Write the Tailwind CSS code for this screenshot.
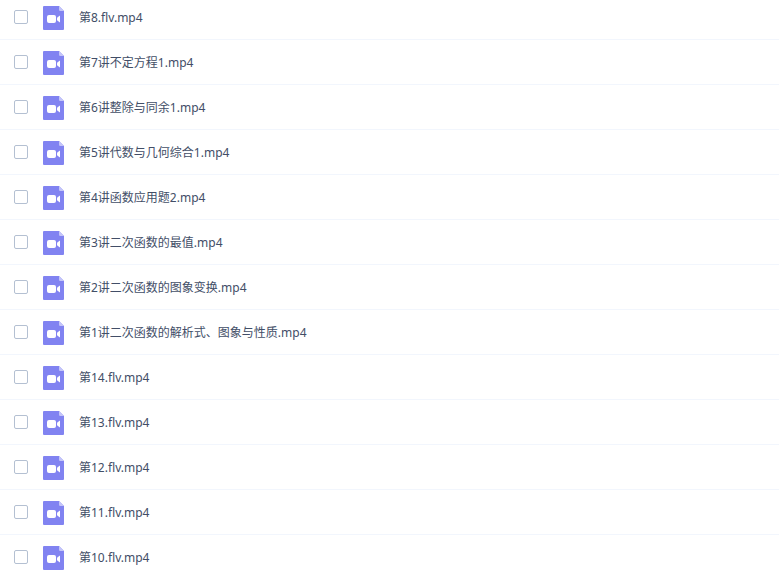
<!DOCTYPE html>
<html lang="zh-CN">
<head>
  <meta charset="UTF-8" />
  <title>视频列表</title>
  <meta name="viewport" content="width=device-width, initial-scale=1.0" />
  <script src="https://cdn.jsdelivr.net/npm/@tailwindcss/browser@4"></script>
</head>
<body class="bg-white text-[#424e67] font-['Noto_Sans','Noto_Sans_CJK_SC',sans-serif]">

  <!-- Shared file icon -->
  <svg class="hidden">
    <symbol id="videoIcon" viewBox="0 0 21 24">
      <path d="M1 0H16L21 5V23A1 1 0 0 1 20 24H1A1 1 0 0 1 0 23V1A1 1 0 0 1 1 0Z" fill="#8183f1" />
      <path d="M16 0L21 5H17.2A1.2 1.2 0 0 1 16 3.8Z" fill="#c4c5f9" />
      <rect x="4" y="9" width="9" height="8" rx="2" fill="#fff" />
      <path d="M17 9.4V16.6L14.6 14.8Q14 14.2 14 13.5V12.5Q14 11.8 14.6 11.2Z" fill="#fff" />
    </symbol>
  </svg>

  <!-- The list is scrolled slightly, the first row is cut at the top -->
  <ul id="fileList" class="-mt-[5px]"></ul>

  <script>
    const files = [
      "第8.flv.mp4",
      "第7讲不定方程1.mp4",
      "第6讲整除与同余1.mp4",
      "第5讲代数与几何综合1.mp4",
      "第4讲函数应用题2.mp4",
      "第3讲二次函数的最值.mp4",
      "第2讲二次函数的图象变换.mp4",
      "第1讲二次函数的解析式、图象与性质.mp4",
      "第14.flv.mp4",
      "第13.flv.mp4",
      "第12.flv.mp4",
      "第11.flv.mp4",
      "第10.flv.mp4"
    ];

    const list = document.getElementById("fileList");

    files.forEach((name, index) => {
      const row = document.createElement("li");
      row.className = "flex items-center h-[45px] px-3.5 border-b border-[#f2f6fd]";
      row.innerHTML = `
        <input type="checkbox" id="file${index}" class="appearance-none shrink-0 size-3.5 rounded-xs border border-[#b4c0d2] bg-white checked:bg-[#3b8cff]" />
        <label for="file${index}" class="flex flex-1 items-center pt-0.5 pl-[15px] gap-[15px] text-xs">
          <svg class="shrink-0 w-[21px] h-6" aria-hidden="true"><use href="#videoIcon" /></svg>
          <span>${name}</span>
        </label>
      `;
      list.appendChild(row);
    });
  </script>
</body>
</html>
